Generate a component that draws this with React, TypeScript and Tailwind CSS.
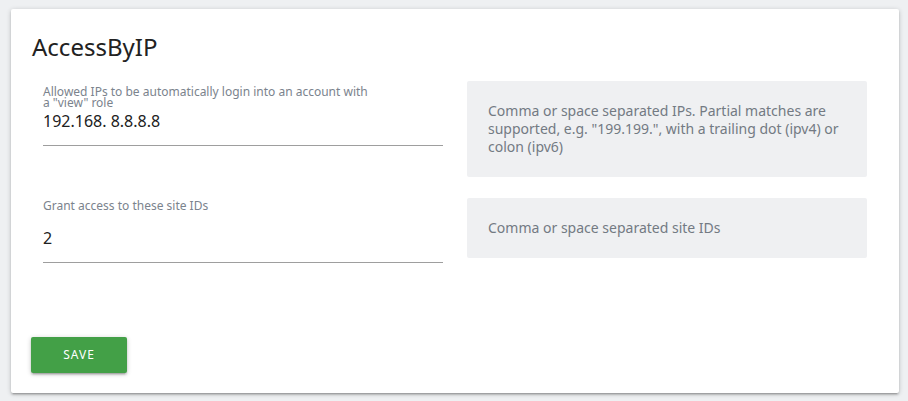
const sans = "font-['Noto_Sans',sans-serif]";

interface IFieldRowProps {
  label: string;
  value: string;
  help: string;
  labelPad: string;
  valueGap: string;
}

const FieldRow = (props: IFieldRowProps) => (
  <div className="grid grid-cols-[400px_400px] gap-x-[24px] items-start">
    <div className={props.labelPad}>
      <div className="w-[330px] text-[12px] leading-[11px] text-[#7b838d]">
        {props.label}
      </div>
      <div
        className={`${props.valueGap} pb-[12px] border-b border-[#9e9e9e] text-[16px] leading-[24px] text-[#212121]`}
      >
        {props.value}
      </div>
    </div>

    <div className="rounded-[2px] bg-[#eff0f2] p-[21px] text-[14px] leading-[18px] text-[#737a83]">
      {props.help}
    </div>
  </div>
);

export default function App() {
  return (
    <div className={`${sans} min-h-[401px] w-[908px] bg-[#eef0f2] pt-[9px]`}>
      <div className="ml-[11px] w-[888px] rounded-[2px] bg-white pt-[22px] pb-[20px] shadow-[0_2px_2px_0_rgba(0,0,0,0.14),0_3px_1px_-2px_rgba(0,0,0,0.12),0_1px_5px_0_rgba(0,0,0,0.2)]">
        <h2 className="pl-[21px] text-[24px] leading-[32px] text-[#222]">
          AccessByIP
        </h2>

        <div className="mt-[18px] px-[32px]">
          <FieldRow
            label={'Allowed IPs to be automatically login into an account with a "view" role'}
            value="192.168. 8.8.8.8"
            help={'Comma or space separated IPs. Partial matches are supported, e.g. "199.199.", with a trailing dot (ipv4) or colon (ipv6)'}
            labelPad="pt-[5px]"
            valueGap="mt-[1px]"
          />

          <div className="mt-[21px]">
            <FieldRow
              label="Grant access to these site IDs"
              value="2"
              help="Comma or space separated site IDs"
              labelPad="pt-[2px]"
              valueGap="mt-[15px]"
            />
          </div>
        </div>

        <div className="mt-[74px] ml-[20px]">
          <button
            type="button"
            className="h-[36px] w-[96px] rounded-[2px] bg-[#43a047] text-[12px] tracking-[1px] text-white shadow-[0_2px_2px_0_rgba(0,0,0,0.14),0_3px_1px_-2px_rgba(0,0,0,0.12),0_1px_5px_0_rgba(0,0,0,0.2)]"
          >
            SAVE
          </button>
        </div>
      </div>
    </div>
  );
}
